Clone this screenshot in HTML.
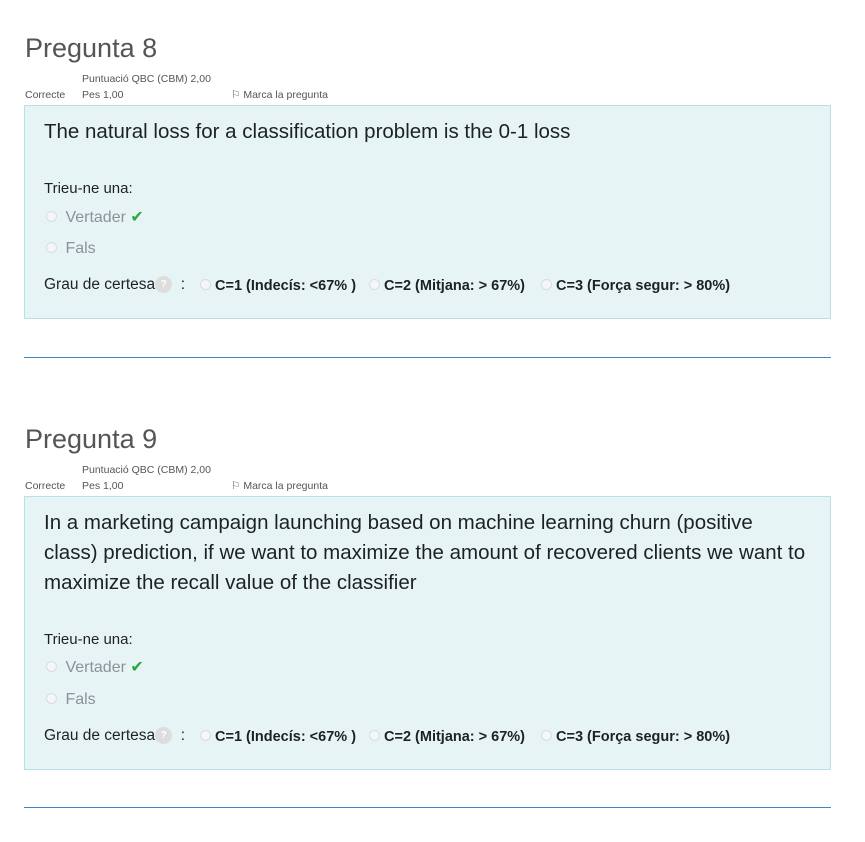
<!DOCTYPE html>
<html><head><meta charset="utf-8"><style>
body{margin:0;width:865px;height:842px;background:#fff;font-family:"Liberation Sans",sans-serif;position:relative;overflow:hidden}
.a{position:absolute;white-space:nowrap}
h2{position:absolute;margin:0;font-weight:normal;font-size:27px;color:#555;left:25px}
.s{font-size:10.5px;color:#555}
.box{position:absolute;left:24px;width:805px;background:#e7f4f6;border:1px solid #b9e0e8}
.q{font-size:20.5px;color:#1d2125;line-height:30px}
.t{font-size:15px;color:#1d2125}
.g{font-size:16px;color:#8a9397}
.r{display:inline-block;width:9px;height:9px;border:1px solid #d8dde0;border-radius:50%;background:#f4f6f7;vertical-align:middle;margin-right:4px;position:relative;top:-1px}
.hr{position:absolute;left:24px;width:807px;height:1px;background:#3f86c3}
.c{font-size:15.5px;color:#1d2125}
.b{font-weight:bold;color:#1d2125;font-size:14.5px}
.help{display:inline-block;width:17px;height:17px;border-radius:50%;background:#ddd;color:#fff;font-size:10px;text-align:center;line-height:17px;vertical-align:middle;font-weight:bold}
.chk{color:#28a745;font-size:16px}
</style></head><body>

<h2 style="top:33px">Pregunta 8</h2>
<div class="a s" style="left:82px;top:73px">Puntuació QBC (CBM) 2,00</div>
<div class="a s" style="left:25px;top:89px">Correcte</div>
<div class="a s" style="left:82px;top:89px">Pes 1,00</div>
<div class="a s" style="left:231px;top:89px">⚐ Marca la pregunta</div>
<div class="box" style="top:105px;height:212px"></div>
<div class="a q" style="left:44px;top:117px">The natural loss for a classification problem is the 0-1 loss</div>
<div class="a t" style="left:44px;top:180px">Trieu-ne una:</div>
<div class="a g" style="left:46px;top:207px"><span class="r"></span> Vertader <span class="chk">✔</span></div>
<div class="a g" style="left:46px;top:240px"><span class="r"></span> Fals</div>
<div class="a c" style="left:44px;top:276px">Grau de certesa<span class="help">?</span> &nbsp;:</div>
<div class="a c" style="left:200px;top:277px"><span class="r"></span><span class="b">C=1 (Indecís: &lt;67% )</span></div>
<div class="a c" style="left:369px;top:277px"><span class="r"></span><span class="b">C=2 (Mitjana: &gt; 67%)</span></div>
<div class="a c" style="left:541px;top:277px"><span class="r"></span><span class="b">C=3 (Força segur: &gt; 80%)</span></div>
<div class="hr" style="top:357px"></div>

<h2 style="top:424px">Pregunta 9</h2>
<div class="a s" style="left:82px;top:464px">Puntuació QBC (CBM) 2,00</div>
<div class="a s" style="left:25px;top:480px">Correcte</div>
<div class="a s" style="left:82px;top:480px">Pes 1,00</div>
<div class="a s" style="left:231px;top:480px">⚐ Marca la pregunta</div>
<div class="box" style="top:496px;height:272px"></div>
<div class="a q" style="left:44px;top:508px">In a marketing campaign launching based on machine learning churn (positive<br>class) prediction, if we want to maximize the amount of recovered clients we want to<br>maximize the recall value of the classifier</div>
<div class="a t" style="left:44px;top:631px">Trieu-ne una:</div>
<div class="a g" style="left:46px;top:657px"><span class="r"></span> Vertader <span class="chk">✔</span></div>
<div class="a g" style="left:46px;top:691px"><span class="r"></span> Fals</div>
<div class="a c" style="left:44px;top:727px">Grau de certesa<span class="help">?</span> &nbsp;:</div>
<div class="a c" style="left:200px;top:728px"><span class="r"></span><span class="b">C=1 (Indecís: &lt;67% )</span></div>
<div class="a c" style="left:369px;top:728px"><span class="r"></span><span class="b">C=2 (Mitjana: &gt; 67%)</span></div>
<div class="a c" style="left:541px;top:728px"><span class="r"></span><span class="b">C=3 (Força segur: &gt; 80%)</span></div>
<div class="hr" style="top:807px"></div>
</body></html>
